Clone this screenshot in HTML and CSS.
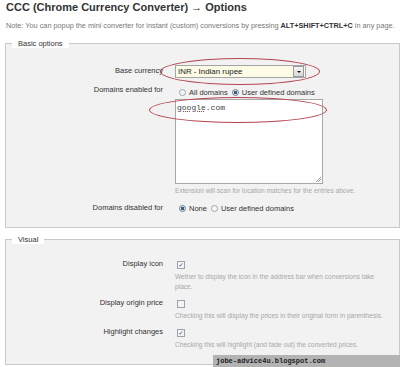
FILE: index.html
```html
<!DOCTYPE html>
<html lang="en">
<head>
    <meta charset="UTF-8">
    <title>CCC (Chrome Currency Converter) - Options</title>
    <link rel="stylesheet" href="styles.css">
</head>
<body>
<div class="page">
    <h1>CCC (Chrome Currency Converter) &rarr; Options</h1>
    <p class="note">Note: You can popup the mini converter for instant (custom) conversions by pressing <b>ALT+SHIFT+CTRL+C</b> in any page.</p>

    <fieldset class="group basic">
        <legend>Basic options</legend>
        <div class="row row-currency">
            <div class="label">Base currency</div>
            <div class="field">
                <div class="select">
                    <span class="select-text">INR - Indian rupee</span>
                    <span class="select-btn"><span class="tri"></span></span>
                </div>
            </div>
        </div>
        <div class="row row-enabled">
            <div class="label">Domains enabled for</div>
            <div class="field">
                <div class="choices">
                    <span class="radio"></span><span class="choice">All domains</span>
                    <span class="radio on"></span><span class="choice">User defined domains</span>
                </div>
                <div class="textarea"><span class="typo">google</span>.com<span class="grip"></span></div>
                <div class="hint">Extension will scan for location matches for the entries above.</div>
            </div>
        </div>
        <div class="row row-disabled">
            <div class="label">Domains disabled for</div>
            <div class="field">
                <div class="choices">
                    <span class="radio on"></span><span class="choice">None</span>
                    <span class="radio"></span><span class="choice">User defined domains</span>
                </div>
            </div>
        </div>
    </fieldset>

    <fieldset class="group visual">
        <legend>Visual</legend>
        <div class="row row-check">
            <div class="label">Display icon</div>
            <div class="field">
                <span class="check on"></span>
                <div class="desc">Wether to display the icon in the address bar when conversions take place.</div>
            </div>
        </div>
        <div class="row row-check">
            <div class="label">Display origin price</div>
            <div class="field">
                <span class="check"></span>
                <div class="desc">Checking this will display the prices in their original form in parenthesis.</div>
            </div>
        </div>
        <div class="row row-check">
            <div class="label">Highlight changes</div>
            <div class="field">
                <span class="check on"></span>
                <div class="desc">Checking this will highlight (and fade out) the converted prices.</div>
            </div>
        </div>
    </fieldset>

    <!-- hand drawn marks on the screenshot -->
    <div class="circle circle-select"></div>
    <div class="circle circle-domain"></div>
    <div class="stamp">jobe-advice4u.blogspot.com</div>
</div>
</body>
</html>
```

FILE: styles.css
```css
body {
  margin: 0;
  background-color: #fff;
  font-family: "Liberation Sans", Arial, sans-serif;
  color: #333;
}

.page {
  position: relative;
  height: 367px;
  overflow: hidden;
  padding: 1px 0 0 5px;
  box-sizing: border-box;
}

h1 {
  margin: 0 0 0 1px;
  font-size: 11px;
  line-height: 13px;
  font-weight: bold;
  color: #333;
}

.note {
  margin: 7px 0 0 1px;
  font-size: 7.3px;
  line-height: 10px;
  color: #777;
}

.note b {
  color: #333;
}

.group {
  width: 395px;
  box-sizing: border-box;
  margin: 8px 0 0;
  padding: 0;
  border: 1px solid #c9c9c9;
  background-color: #f2f2f2;
}

.group legend {
  margin-left: 6px;
  padding: 0 6px;
  background-color: #fff;
  font-size: 7.5px;
  line-height: 9px;
  color: #333;
}

.visual {
  margin-top: 7px;
}

.row {
  display: grid;
  grid-template-columns: 157px 211px;
  column-gap: 12px;
}

.label {
  text-align: right;
  font-size: 7.5px;
  line-height: 10px;
  color: #333;
}

.row-currency {
  margin-top: 17px;
}

.row-currency .label {
  padding-top: 1px;
}

.row-enabled {
  margin-top: 9px;
}

.row-enabled .label {
  margin-top: -2px;
}

.row-disabled {
  margin-top: 7px;
  margin-bottom: 14px;
}

/* select box */
.select {
  display: flex;
  align-items: center;
  width: 131px;
  height: 13px;
  box-sizing: border-box;
  border: 1px solid #a5a5a5;
  background-color: #fdfbe6;
  padding: 0 1px 0 2px;
}

.select-text {
  flex: 1;
  font-size: 7.9px;
  color: #222;
}

.select-btn {
  display: flex;
  align-items: center;
  justify-content: center;
  width: 9px;
  height: 9px;
  border: 1px solid #9a9a9a;
  background: linear-gradient(#f6f6f6, #d8d8d8);
}

.tri {
  width: 0;
  height: 0;
  border-left: 2px solid transparent;
  border-right: 2px solid transparent;
  border-top: 2px solid #111;
}

/* radios */
.choices {
  display: flex;
  align-items: center;
  height: 10px;
  padding-left: 4px;
  font-size: 7.5px;
  color: #333;
}

.radio {
  width: 7px;
  height: 7px;
  box-sizing: border-box;
  border: 1px solid #9ca3ab;
  border-radius: 50%;
  background-color: #f7f7f7;
  margin-right: 3px;
}

.radio.on {
  border-color: #6b7f95;
  background: radial-gradient(circle, #3d5c84 0 1.6px, #dfe6ee 2px);
}

.choice {
  margin-right: 4px;
}

.textarea {
  position: relative;
  width: 148px;
  height: 85px;
  box-sizing: border-box;
  margin-top: 2px;
  border: 1px solid #a8a8a8;
  background-color: #fff;
  padding: 3px 1px;
  font-family: "Liberation Mono", "Courier New", monospace;
  font-size: 8px;
  line-height: 9px;
  color: #444;
}

.typo {
  text-decoration: underline dotted #c33;
}

.grip {
  position: absolute;
  right: 1px;
  bottom: 1px;
  width: 5px;
  height: 5px;
  background: linear-gradient(135deg, transparent 45%, #999 45% 55%, transparent 55% 70%, #999 70% 80%, transparent 80%);
}

.hint {
  margin-top: 2px;
  font-size: 6.6px;
  line-height: 10px;
  color: #a8a8a8;
}

/* visual options */
.visual .row-check:first-of-type {
  margin-top: 15px;
}

.row-check {
  margin-top: 6px;
}

.row-check:last-child {
  margin-bottom: 14px;
}

.check {
  display: flex;
  align-items: center;
  justify-content: center;
  width: 8px;
  height: 8px;
  box-sizing: border-box;
  margin: 2px 0 0 2px;
  border: 1px solid #9aa3ad;
  background-color: #f4f4f4;
  line-height: 1;
  color: #2a4a7a;
}

.check.on::after {
  content: "✓";
  font-family: "DejaVu Sans", sans-serif;
  font-size: 6px;
  font-weight: bold;
}

.desc {
  margin-top: 3px;
  font-size: 6.6px;
  line-height: 10px;
  color: #a8a8a8;
}

/* marks drawn on top of the screenshot */
.circle {
  position: absolute;
  border: 1px solid #b5464e;
  border-radius: 50%;
}

.circle-select {
  left: 160px;
  top: 58px;
  width: 158px;
  height: 25px;
}

.circle-domain {
  left: 149px;
  top: 97px;
  width: 176px;
  height: 24px;
}

.stamp {
  position: absolute;
  left: 213px;
  top: 355px;
  width: 187px;
  height: 12px;
  padding-left: 3px;
  box-sizing: border-box;
  background-color: #b3b3b3;
  font-family: "Liberation Mono", "Courier New", monospace;
  font-size: 7px;
  font-weight: bold;
  line-height: 12px;
  color: #222;
}
```
